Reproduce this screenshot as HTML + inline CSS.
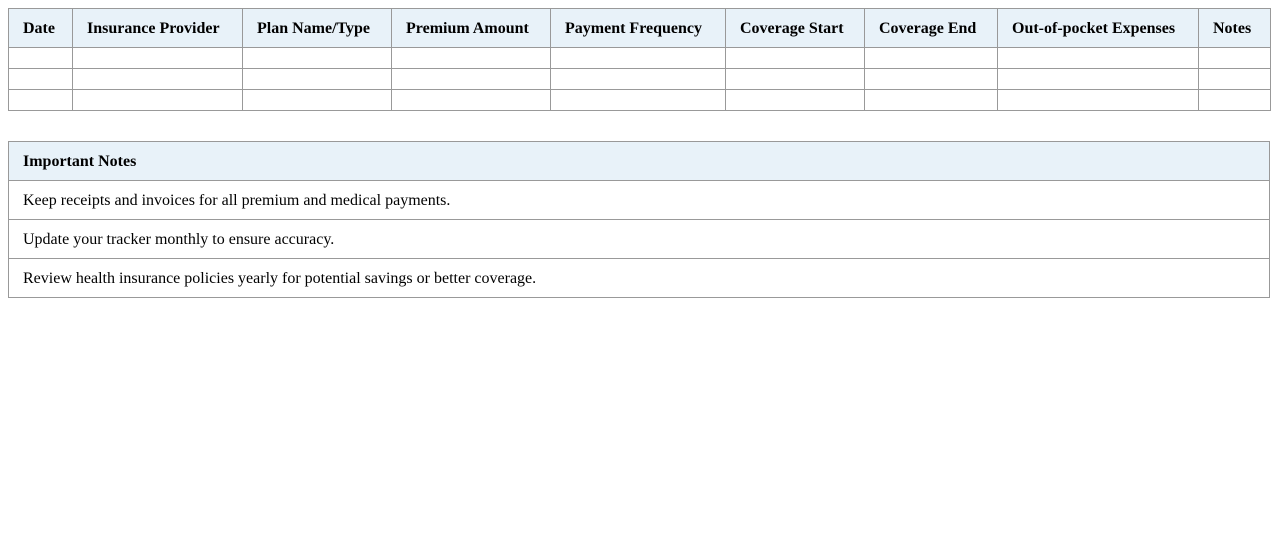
<!DOCTYPE html>
<html><head><meta charset="utf-8"><style>
body{margin:8px;font-family:"Liberation Serif",serif;font-size:16px;color:#000;background:#fff}
table{border-collapse:collapse;width:1262px;table-layout:fixed}
td,th{border:1px solid #999;padding:0 14px;text-align:left;overflow:hidden;white-space:nowrap}
th{background:#e8f2f9;font-weight:bold;height:36px;padding-top:2px}
.t1 td{height:20px}
.t2{margin-top:30px}
.t2 td{height:36px;padding-top:2px}
</style></head><body>
<table class="t1">
<colgroup><col style="width:64px"><col style="width:170px"><col style="width:149px"><col style="width:159px"><col style="width:175px"><col style="width:139px"><col style="width:133px"><col style="width:201px"><col style="width:72px"></colgroup>
<tr><th>Date</th><th>Insurance Provider</th><th>Plan Name/Type</th><th>Premium Amount</th><th>Payment Frequency</th><th>Coverage Start</th><th>Coverage End</th><th>Out-of-pocket Expenses</th><th>Notes</th></tr>
<tr><td></td><td></td><td></td><td></td><td></td><td></td><td></td><td></td><td></td></tr>
<tr><td></td><td></td><td></td><td></td><td></td><td></td><td></td><td></td><td></td></tr>
<tr><td></td><td></td><td></td><td></td><td></td><td></td><td></td><td></td><td></td></tr>
</table>
<table class="t2">
<tr><th>Important Notes</th></tr>
<tr><td>Keep receipts and invoices for all premium and medical payments.</td></tr>
<tr><td>Update your tracker monthly to ensure accuracy.</td></tr>
<tr><td>Review health insurance policies yearly for potential savings or better coverage.</td></tr>
</table>
</body></html>
